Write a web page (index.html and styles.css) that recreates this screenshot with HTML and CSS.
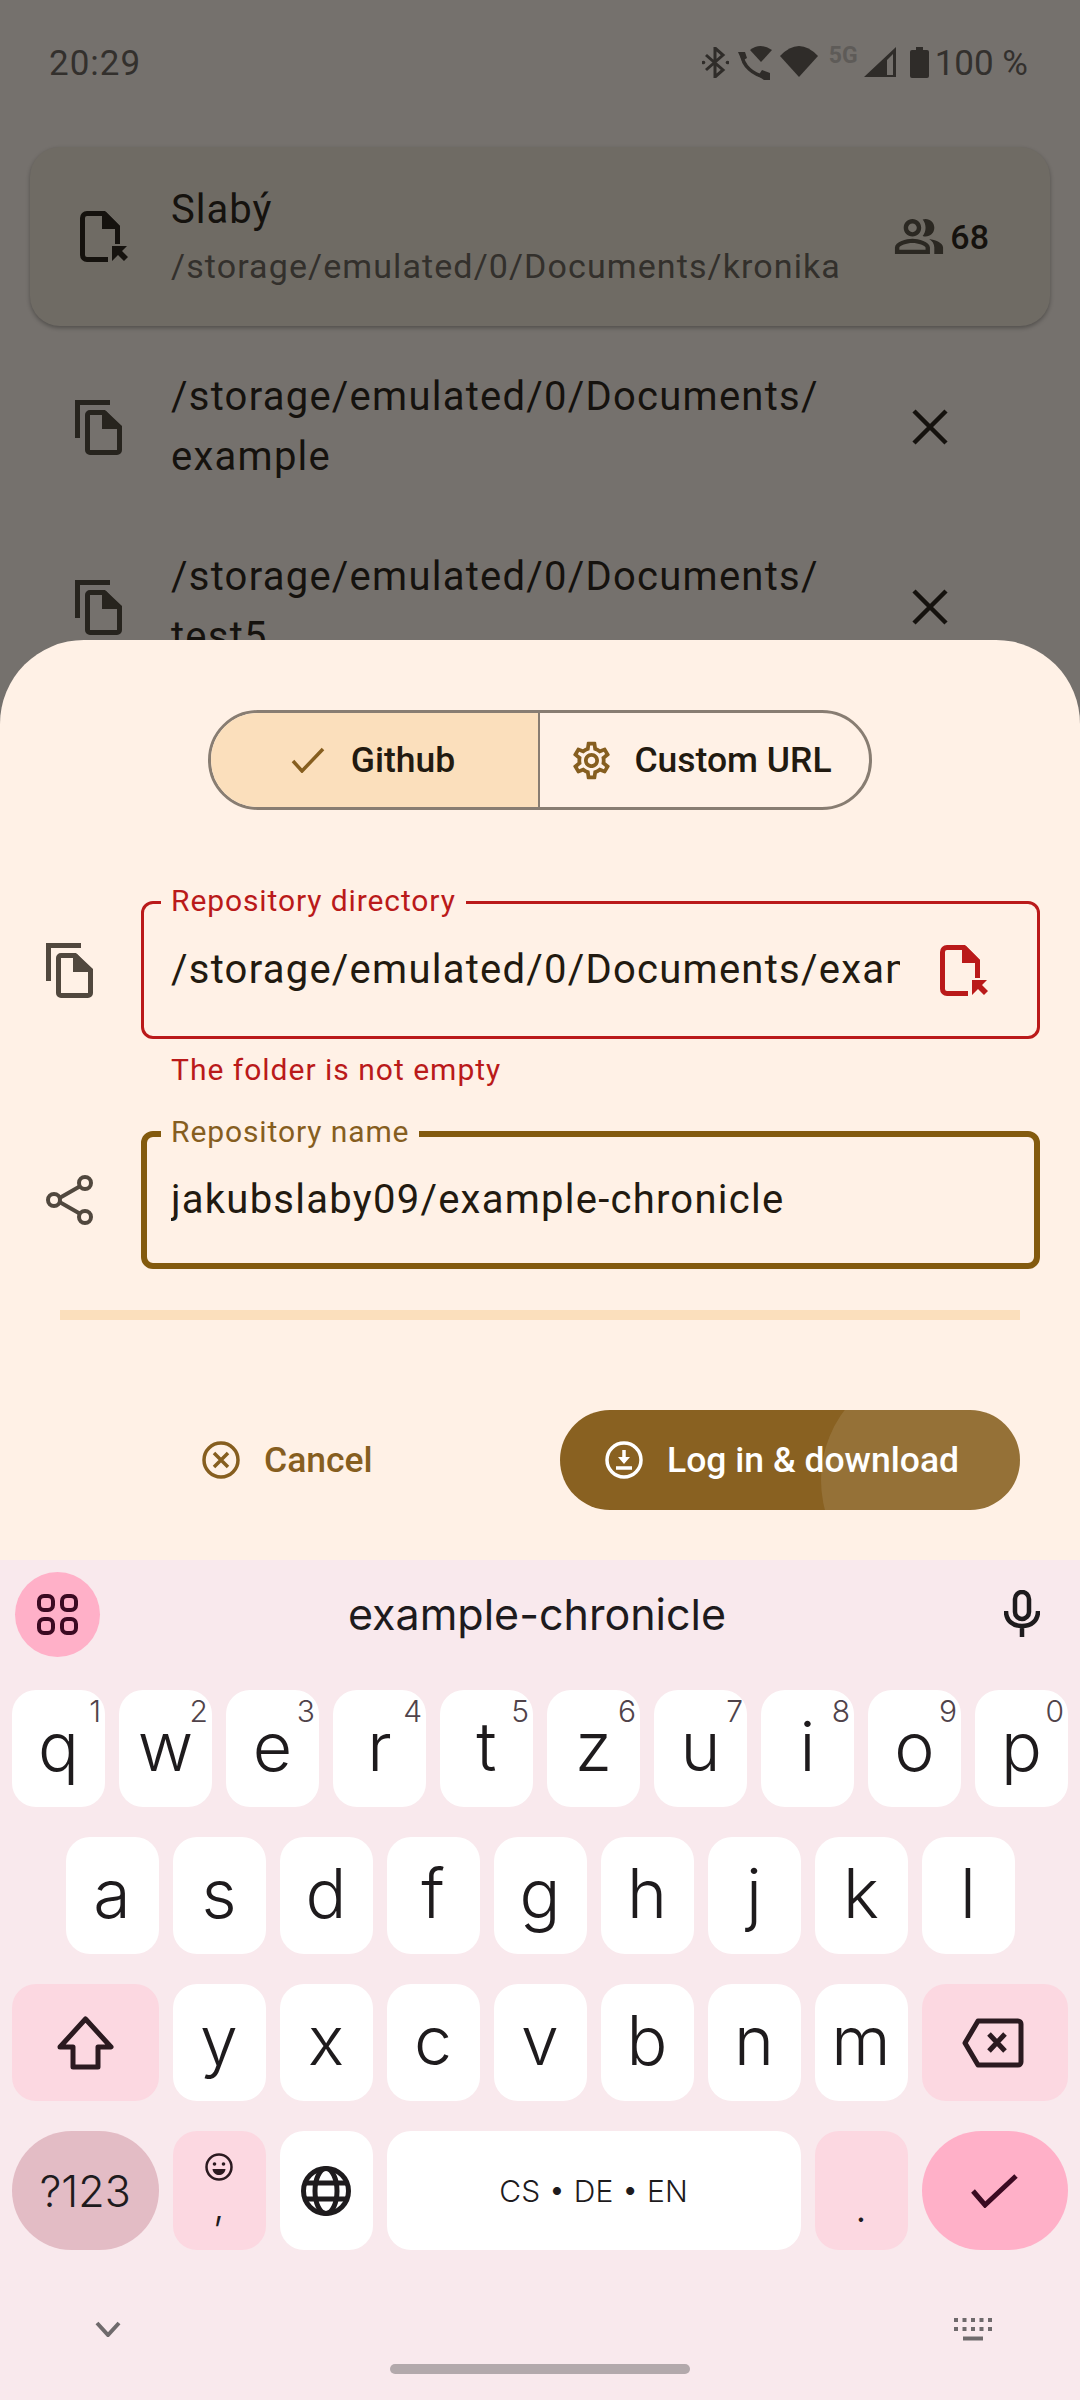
FILE: index.html
```html
<!DOCTYPE html>
<html lang="en">
<head>
    <meta charset="UTF-8">
    <meta name="viewport" content="width=device-width, initial-scale=1.0">
    <title>Repository</title>
    <link rel="stylesheet" href="styles.css">
</head>
<body>
    <div class="backdrop">
        <div class="status">
            <span class="clock">20:29</span>
            <svg class="st-bt" width="27" height="31" viewBox="0 0 27 31"><path d="M4 8L21 23L13 30V1L21 8L4 23" fill="none" stroke="#2f2c29" stroke-width="3"/><circle cx="1.5" cy="15.5" r="1.8" fill="#2f2c29"/><circle cx="25.5" cy="15.5" r="1.8" fill="#2f2c29"/></svg>
            <svg class="st-call" width="35" height="35" viewBox="0 0 35 35"><path d="M5 9C5 20 16 31 31 32" fill="none" stroke="#2f2c29" stroke-width="3.5"/><path d="M1 7h7l2 6-5 3zM21 31l4-6 8 3v7h-6z" fill="#2f2c29"/><path d="M13 5Q23 -3 35 5L24 17Z" fill="#2f2c29"/></svg>
            <svg class="st-wifi" width="38" height="31" viewBox="0 0 38 31"><path d="M0 10Q19 -10 38 10L19 31Z" fill="#2f2c29"/></svg>
            <span class="st-5g">5G</span>
            <svg class="st-signal" width="32" height="30" viewBox="0 0 32 30"><path d="M0 30L32 0V30ZM23 28H29V7L23 13Z" fill="#2f2c29" fill-rule="evenodd"/></svg>
            <svg class="st-batt" width="19" height="31" viewBox="0 0 19 31"><path d="M6 0h7v3h4a2 2 0 0 1 2 2v24a2 2 0 0 1-2 2H2a2 2 0 0 1-2-2V5a2 2 0 0 1 2-2h4z" fill="#2f2c29"/></svg>
            <span class="st-pct">100 %</span>
        </div>

        <div class="card">
            <svg class="icon-card" width="48" height="51" viewBox="0 0 48 51"><use href="#file-pick"/></svg>
            <div class="card-text">
                <div class="card-title">Slabý</div>
                <div class="card-path">/storage/emulated/0/Documents/kronika</div>
            </div>
            <svg class="icon-users" width="50" height="35" viewBox="1 4 22 16"><path fill="#2b2822" d="M16.67 13.13C18.04 14.06 19 15.32 19 17v3h4v-3c0-2.18-3.57-3.47-6.33-3.87zM15 12c2.21 0 4-1.79 4-4s-1.79-4-4-4c-.47 0-.91.1-1.33.24C14.5 5.27 15 6.58 15 8s-.5 2.73-1.33 3.76c.42.14.86.24 1.33.24zM9 12c2.21 0 4-1.79 4-4s-1.79-4-4-4-4 1.79-4 4 1.79 4 4 4zm0-6c1.1 0 2 .9 2 2s-.9 2-2 2-2-.9-2-2 .9-2 2-2zM9 13c-2.67 0-8 1.34-8 4v3h16v-3c0-2.66-5.33-4-8-4zm6 5H3v-.99C3.2 16.29 6.3 15 9 15s5.8 1.29 6 2z"/></svg>
            <span class="card-count">68</span>
        </div>

        <div class="row">
            <svg class="icon-copy" width="47" height="55" viewBox="0 0 47 55"><use href="#copy" color="#27241e"/></svg>
            <div class="row-text">/storage/emulated/0/Documents/<br>example</div>
            <svg class="icon-x" width="36" height="36" viewBox="0 0 36 36"><path d="M2 2L34 34M34 2L2 34" stroke="#15120e" stroke-width="4.5" fill="none"/></svg>
        </div>
        <div class="row">
            <svg class="icon-copy" width="47" height="55" viewBox="0 0 47 55"><use href="#copy" color="#27241e"/></svg>
            <div class="row-text">/storage/emulated/0/Documents/<br>test5</div>
            <svg class="icon-x" width="36" height="36" viewBox="0 0 36 36"><path d="M2 2L34 34M34 2L2 34" stroke="#15120e" stroke-width="4.5" fill="none"/></svg>
        </div>
    </div>

    <section class="sheet">
        <div class="segments">
            <div class="seg seg-on">
                <svg width="34" height="26" viewBox="0 0 34 26"><path d="M2 14L11 24L32 2" fill="none" stroke="#865e1f" stroke-width="3.5"/></svg>
                <span>Github</span>
            </div>
            <div class="seg seg-off">
                <svg width="45" height="45" viewBox="0 0 24 24"><path fill="#865e1f" d="M19.43 12.98c.04-.32.07-.64.07-.98 0-.34-.03-.66-.07-.98l2.11-1.65c.19-.15.24-.42.12-.64l-2-3.46c-.09-.16-.26-.25-.44-.25-.06 0-.12.01-.17.03l-2.49 1c-.52-.4-1.08-.73-1.69-.98l-.38-2.65C14.46 2.18 14.25 2 14 2h-4c-.25 0-.46.18-.49.42l-.38 2.65c-.61.25-1.17.59-1.69.98l-2.49-1c-.06-.02-.12-.03-.18-.03-.17 0-.34.09-.43.25l-2 3.46c-.13.22-.07.49.12.64l2.11 1.65c-.04.32-.07.65-.07.98 0 .33.03.66.07.98l-2.11 1.65c-.19.15-.24.42-.12.64l2 3.46c.09.16.26.25.44.25.06 0 .12-.01.17-.03l2.49-1c.52.4 1.08.73 1.69.98l.38 2.65c.03.24.24.42.49.42h4c.25 0 .46-.18.49-.42l.38-2.65c.61-.25 1.17-.59 1.69-.98l2.49 1c.06.02.12.03.18.03.17 0 .34-.09.43-.25l2-3.46c.12-.22.07-.49-.12-.64l-2.11-1.65zm-1.98-1.71c.04.31.05.52.05.73 0 .21-.02.43-.05.73l-.14 1.13.89.7 1.08.84-.7 1.21-1.27-.51-1.04-.42-.9.68c-.43.32-.84.56-1.25.73l-1.06.43-.16 1.13-.2 1.35h-1.4l-.19-1.35-.16-1.13-1.06-.43c-.43-.18-.83-.41-1.23-.71l-.91-.7-1.06.43-1.27.51-.7-1.21 1.08-.84.89-.7-.14-1.13c-.03-.31-.05-.54-.05-.74s.02-.43.05-.73l.14-1.13-.89-.7-1.08-.84.7-1.21 1.27.51 1.04.42.9-.68c.43-.32.84-.56 1.25-.73l1.06-.43.16-1.13.2-1.35h1.39l.19 1.35.16 1.13 1.06.43c.43.18.83.41 1.23.71l.91.7 1.06-.43 1.27-.51.7 1.21-1.07.85-.89.7.14 1.13zM12 8c-2.21 0-4 1.79-4 4s1.79 4 4 4 4-1.79 4-4-1.79-4-4-4zm0 6c-1.1 0-2-.9-2-2s.9-2 2-2 2 .9 2 2-.9 2-2 2z"/></svg>
                <span>Custom URL</span>
            </div>
        </div>

        <div class="form-row form-first">
            <svg class="form-icon" width="47" height="55" viewBox="0 0 47 55"><use href="#copy" color="#51483e"/></svg>
            <div class="field field-error">
                <span class="field-label">Repository directory</span>
                <div class="field-value">/storage/emulated/0/Documents/example</div>
                <svg class="field-pick" width="48" height="51" viewBox="0 0 48 51"><use href="#file-pick"/></svg>
            </div>
        </div>
        <p class="field-help">The folder is not empty</p>
        <div class="form-row">
            <svg class="form-icon" width="47" height="50" viewBox="0 0 47 50"><g fill="none" stroke="#51483e" stroke-width="4"><path d="M38 9L10 25L38 41"/><circle cx="39" cy="8" r="6" fill="#fff1e6"/><circle cx="8" cy="25" r="6" fill="#fff1e6"/><circle cx="39" cy="42" r="6" fill="#fff1e6"/></g></svg>
            <div class="field field-focus">
                <span class="field-label">Repository name</span>
                <div class="field-value">jakubslaby09/example-chronicle</div>
            </div>
        </div>

        <div class="progress"></div>

        <div class="actions">
            <div class="btn-cancel">
                <svg width="38" height="38" viewBox="0 0 38 38"><g fill="none" stroke="#865e1f" stroke-width="3.5"><circle cx="19" cy="19" r="17"/><path d="M12 12L26 26M26 12L12 26"/></g></svg>
                <span>Cancel</span>
            </div>
            <div class="btn-main">
                <div class="ripple"></div>
                <svg class="btn-main-icon" width="38" height="38" viewBox="0 0 38 38"><g fill="none" stroke="#fff" stroke-width="3.5"><circle cx="19" cy="19" r="17"/><path d="M19 9V21M11 27H27"/></g><path d="M13 16H25L19 23Z" fill="#fff"/></svg>
                <span class="btn-main-text">Log in &amp; download</span>
            </div>
        </div>
    </section>

    <section class="keyboard">
        <div class="kb-top">
            <div class="kb-apps">
                <svg width="41" height="41" viewBox="0 0 41 41"><g fill="none" stroke="#3b0a22" stroke-width="4"><rect x="2" y="2" width="14" height="14" rx="5"/><rect x="25" y="2" width="14" height="14" rx="5"/><rect x="2" y="25" width="14" height="14" rx="5"/><rect x="25" y="25" width="14" height="14" rx="5"/></g></svg>
            </div>
            <div class="kb-suggest">example-chronicle</div>
            <svg class="kb-mic" width="36" height="47" viewBox="0 0 36 47"><rect x="11" y="2" width="14" height="27" rx="7" fill="none" stroke="#1e1b1d" stroke-width="4.5"/><path d="M2 21C2 31 9 36 18 36S34 31 34 21M18 36V47" fill="none" stroke="#1e1b1d" stroke-width="4.5"/></svg>
        </div>

        <div class="kb-row">
            <div class="key">q<sup class="hint">1</sup></div>
            <div class="key">w<sup class="hint">2</sup></div>
            <div class="key">e<sup class="hint">3</sup></div>
            <div class="key">r<sup class="hint">4</sup></div>
            <div class="key">t<sup class="hint">5</sup></div>
            <div class="key">z<sup class="hint">6</sup></div>
            <div class="key">u<sup class="hint">7</sup></div>
            <div class="key">i<sup class="hint">8</sup></div>
            <div class="key">o<sup class="hint">9</sup></div>
            <div class="key">p<sup class="hint">0</sup></div>
        </div>
        <div class="kb-row">
            <div class="key">a</div>
            <div class="key">s</div>
            <div class="key">d</div>
            <div class="key">f</div>
            <div class="key">g</div>
            <div class="key">h</div>
            <div class="key">j</div>
            <div class="key">k</div>
            <div class="key">l</div>
        </div>
        <div class="kb-row">
            <div class="key key-mod key-wide">
                <svg width="57" height="54" viewBox="0 0 57 54"><path d="M28.5 3L54 31H41V51H16V31H3Z" fill="none" stroke="#2b1a20" stroke-width="5" stroke-linejoin="round"/></svg>
            </div>
            <div class="key">y</div>
            <div class="key">x</div>
            <div class="key">c</div>
            <div class="key">v</div>
            <div class="key">b</div>
            <div class="key">n</div>
            <div class="key">m</div>
            <div class="key key-mod key-wide">
                <svg class="icon-back" width="62" height="50" viewBox="0 0 62 50"><path d="M16 3H56a3 3 0 0 1 3 3V44a3 3 0 0 1-3 3H16L3 25Z" fill="none" stroke="#2b1a20" stroke-width="5" stroke-linejoin="round"/><path d="M27 16L43 33M43 16L27 33" fill="none" stroke="#2b1a20" stroke-width="5"/></svg>
            </div>
        </div>
        <div class="kb-row kb-row-last">
            <div class="key key-num key-wide">?123</div>
            <div class="key key-mod key-emoji">
                <svg width="28" height="28" viewBox="0 0 28 28"><circle cx="14" cy="14" r="12.5" fill="none" stroke="#2b1a20" stroke-width="2.5"/><circle cx="9.5" cy="11" r="1.8" fill="#2b1a20"/><circle cx="18.500" cy="11" r="1.8" fill="#2b1a20"/><path d="M7.5 16H20.5C20 20 17 22 14 22S8 20 7.5 16Z" fill="#2b1a20"/></svg>
                <span>,</span>
            </div>
            <div class="key key-globe">
                <svg width="50" height="50" viewBox="0 0 50 50"><g fill="none" stroke="#1e1b1d" stroke-width="5"><circle cx="25" cy="25" r="22.500"/><ellipse cx="25" cy="25" rx="11" ry="22.500"/><path d="M4 17H46M4 33H46"/></g></svg>
            </div>
            <div class="key key-space">CS • DE • EN</div>
            <div class="key key-mod key-period">.</div>
            <div class="key key-enter key-wide">
                <svg width="47" height="34" viewBox="0 0 47 34"><path d="M2 17L14 31L45 2" fill="none" stroke="#3b0a22" stroke-width="5"/></svg>
            </div>
        </div>

        <div class="kb-nav">
            <svg width="26" height="16" viewBox="0 0 26 16"><path d="M2 2L13 14L24 2" fill="none" stroke="#6f6a6c" stroke-width="4"/></svg>
            <svg width="38" height="24" viewBox="0 0 38 24"><path d="M0 3H38M0 12H38" stroke="#6f6a6c" stroke-width="4" stroke-dasharray="4 4.500"/><path d="M9 21.500H29" stroke="#6f6a6c" stroke-width="4"/></svg>
        </div>
        <div class="home-bar"></div>
    </section>

    <svg class="defs" width="0" height="0">
        <defs>
            <g id="file-pick">
                <path d="M28 48.500H7a4.500 4.500 0 0 1-4.500-4.500V7A4.500 4.500 0 0 1 7 2.500H24L37.500 16V33" fill="none" stroke="currentColor" stroke-width="5"/>
                <path d="M22 1H26L40 15V18H22Z" fill="currentColor"/>
                <path d="M32 35H47L42 40L48 46L44 50L38 44L32 50Z" fill="currentColor"/>
            </g>
            <g id="copy">
                <path d="M35 2.500H2.500V38" fill="none" stroke="currentColor" stroke-width="5"/>
                <path d="M29 12.500H15a2.500 2.500 0 0 0-2.500 2.500V50a2.500 2.500 0 0 0 2.500 2.500H42a2.500 2.500 0 0 0 2.500-2.500V27Z" fill="none" stroke="currentColor" stroke-width="5"/>
                <path d="M27 11H31L46 27V29H27Z" fill="currentColor"/>
            </g>
        </defs>
    </svg>
</body>
</html>
```

FILE: styles.css
```css
* {
    margin: 0px;
    padding: 0px;
    box-sizing: border-box;
}

body {
    width: 1080px;
    height: 2400px;
    overflow: hidden;
    background-color: #75716d;
    font-family: Roboto, "Noto Sans", sans-serif;
}

.defs {
    position: absolute;
}

/* dimmed page behind the sheet */
.backdrop {
    height: 640px;
    overflow: hidden;
}

.status {
    height: 147px;
    padding: 46px 52px 0px 49px;
    display: flex;
    align-items: flex-start;
    color: #33302d;
}

.clock {
    font-size: 35px;
    line-height: 36px;
    letter-spacing: 1px;
    margin-right: auto;
}

.st-bt {
    margin-top: 1px;
}

.st-call {
    margin-left: 8px;
    margin-top: -1px;
}

.st-wifi {
    margin-left: 8px;
}

.st-5g {
    margin-left: 11px;
    font-size: 23px;
    line-height: 18px;
    font-weight: 700;
    color: #5e5b58;
    margin-top: 1px;
}

.st-signal {
    margin-left: 6px;
    margin-top: 1px;
}

.st-batt {
    margin-left: 14px;
    margin-top: 1px;
}

.st-pct {
    margin-left: 6px;
    font-size: 35px;
    line-height: 36px;
}

.card {
    margin: 0px 30px;
    height: 179px;
    border-radius: 30px;
    background-color: #6f6b64;
    box-shadow: 0px 2px 4px rgba(0, 0, 0, 0.3);
    display: flex;
    align-items: center;
    padding-left: 50px;
    color: #15120e;
}

.icon-card {
    color: #15120e;
    margin-right: 43px;
}

.card-text {
    flex: 1;
}

.card-title {
    font-size: 40px;
    line-height: 50px;
    letter-spacing: 1px;
    margin-bottom: 6px;
}

.card-path {
    font-size: 34px;
    line-height: 46px;
    letter-spacing: 1.1px;
    color: #33302c;
    padding-top: 2px;
}

.icon-users {
    margin-right: 6px;
}

.card-count {
    font-size: 34px;
    font-weight: 500;
    margin-right: 61px;
}

.row {
    height: 180px;
    margin-top: 11px;
    margin-bottom: -11px;
    display: flex;
    align-items: center;
    padding-left: 75px;
    color: #15120e;
}

.row-text {
    flex: 1;
    margin-left: 49px;
    font-size: 40px;
    line-height: 60px;
    letter-spacing: 1.25px;
}

.icon-x {
    margin-right: 132px;
}

/* bottom sheet */
.sheet {
    height: 920px;
    background-color: #fff1e6;
    border-radius: 84px 84px 0px 0px;
    padding-top: 70px;
}

.segments {
    width: 664px;
    height: 100px;
    margin: 0px auto;
    border: 3px solid #887d72;
    border-radius: 50px;
    overflow: hidden;
    display: flex;
}

.seg {
    width: 50%;
    display: flex;
    align-items: center;
    justify-content: center;
    font-size: 35.5px;
    font-weight: 500;
    color: #221a10;
}

.seg-on {
    gap: 26px;
    padding-right: 3px;
    background-color: #fbdfbc;
    border-right: 2px solid #887d72;
}

.seg-off {
    gap: 20px;
    padding-right: 8px;
}

.form-row {
    display: flex;
    align-items: center;
}

.form-first {
    margin-top: 91px;
}

.form-icon {
    width: 47px;
    margin-left: 46px;
    margin-right: 48px;
    flex-shrink: 0;
}

.field {
    position: relative;
    width: 899px;
    height: 138px;
    border-radius: 12px;
    display: flex;
    align-items: center;
    font-size: 40px;
    letter-spacing: 1.25px;
    color: #221a10;
}

.field-error {
    border: 3px solid #ba1a1a;
    padding-left: 27px;
}

.field-focus {
    border: 6px solid #835a0e;
    padding-left: 24px;
}

.field-label {
    position: absolute;
    top: -19px;
    left: 17px;
    padding: 0px 10px;
    background-color: #fff1e6;
    font-size: 30px;
    line-height: 32px;
    letter-spacing: 0.9px;
}

.field-error .field-label {
    color: #ba1a1a;
}

.field-focus .field-label {
    left: 14px;
    top: -21px;
    color: #865e1f;
}

.field-value {
    flex: 1;
    white-space: nowrap;
    overflow: hidden;
    margin-right: 40px;
    margin-bottom: 2px;
}

.field-pick {
    color: #ba1a1a;
    margin-right: 49px;
    flex-shrink: 0;
}

.field-help {
    height: 92px;
    padding: 15px 0px 0px 171px;
    font-size: 30px;
    line-height: 32px;
    letter-spacing: 1px;
    color: #ba1a1a;
}

.progress {
    width: 960px;
    height: 10px;
    margin: 41px 0px 0px 60px;
    background-color: #fbdfbc;
}

.actions {
    margin-top: 90px;
    padding: 0px 60px 0px 202px;
    display: flex;
    align-items: center;
}

.btn-cancel {
    display: flex;
    align-items: center;
    gap: 24px;
    font-size: 35.5px;
    font-weight: 500;
    color: #865e1f;
}

.btn-main {
    position: relative;
    overflow: hidden;
    margin-left: auto;
    width: 460px;
    height: 100px;
    border-radius: 50px;
    background-color: #896121;
    display: flex;
    align-items: center;
    padding-left: 45px;
    gap: 24px;
    font-size: 35.5px;
    font-weight: 500;
    color: white;
}

.ripple {
    position: absolute;
    left: 261px;
    top: -45px;
    width: 230px;
    height: 230px;
    border-radius: 50%;
    background-color: rgba(255, 255, 255, 0.1);
}

.btn-main-icon,
.btn-main-text {
    position: relative;
}

/* keyboard */
.keyboard {
    height: 840px;
    background-color: #f9e9ed;
    color: #1e1b1d;
    font-family: Inter, Roboto, sans-serif;
}

.kb-top {
    height: 130px;
    padding: 12px 40px 0px 15px;
    display: flex;
    align-items: flex-start;
}

.kb-apps {
    width: 85px;
    height: 85px;
    border-radius: 50%;
    background-color: #ffb0c8;
    display: flex;
    align-items: center;
    justify-content: center;
}

.kb-suggest {
    flex: 1;
    height: 85px;
    line-height: 85px;
    text-align: center;
    font-size: 43px;
    padding-right: 30px;
}

.kb-mic {
    margin-top: 18px;
}

.kb-row {
    display: flex;
    justify-content: center;
    gap: 14px;
    margin-bottom: 30px;
}

.key {
    position: relative;
    width: 93px;
    height: 117px;
    flex-shrink: 0;
    border-radius: 24px;
    background-color: white;
    display: flex;
    align-items: center;
    justify-content: center;
    font-size: 68px;
    font-weight: 350;
    padding-bottom: 6px;
}

.hint {
    position: absolute;
    top: 3px;
    right: 4px;
    font-size: 30px;
    line-height: 36px;
    color: #50434a;
}

.key-wide,
.key-mod,
.key-globe,
.key-space {
    padding-bottom: 0px;
}

.key-wide {
    width: 146.5px;
}

.key-mod {
    background-color: #fcd8e1;
}

.icon-back {
    margin-right: 3px;
}

.kb-row-last .key {
    height: 119px;
}

.key-num {
    background-color: #e3bcc5;
    border-radius: 60px;
    font-size: 43px;
}

.key-emoji {
    flex-direction: column;
    justify-content: flex-start;
    padding-top: 22px;
    font-size: 40px;
    line-height: 50px;
}

.key-space {
    width: 414px;
    font-size: 30px;
}

.key-period {
    font-size: 42px;
    padding-top: 32px;
}

.key-enter {
    background-color: #ffb0c8;
    border-radius: 60px;
}

.kb-row-last {
    margin-bottom: 0px;
}

.kb-nav {
    padding: 67px 88px 0px 95px;
    display: flex;
    justify-content: space-between;
    align-items: center;
}

.home-bar {
    width: 300px;
    height: 10px;
    margin: 23px auto 0px;
    border-radius: 5px;
    background-color: #b3a9ac;
}
```
